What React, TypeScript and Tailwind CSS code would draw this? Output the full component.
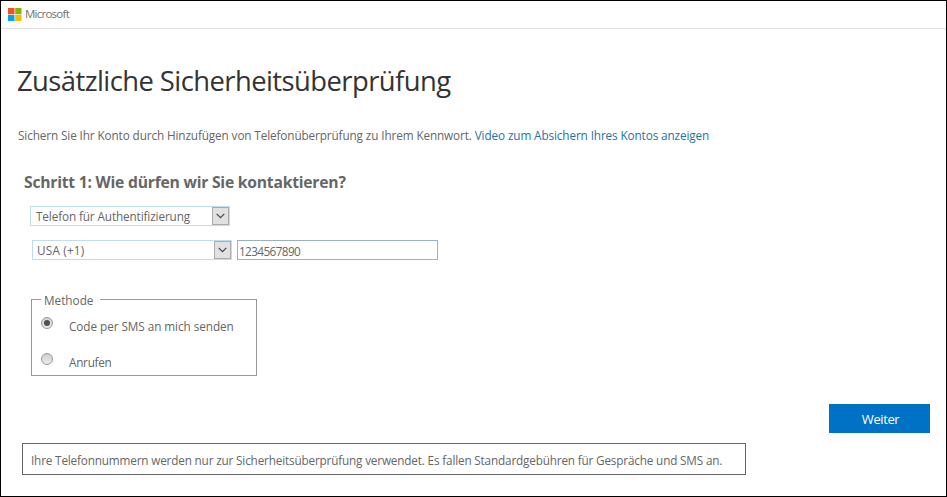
import React from "react";

function Logo() {
  return (
    <svg width="14" height="14" viewBox="0 0 14 14" className="shrink-0" aria-hidden="true">
      <path fill="#f25022" d="M0 0h6.5v6.3H0z" />
      <path fill="#7fba00" d="M7.2 0h6.3v6.3H7.2z" />
      <path fill="#00a4ef" d="M0 7h6.5v6H0z" />
      <path fill="#ffb900" d="M7.2 7h6.3v6H7.2z" />
    </svg>
  );
}

function Dropdown({ label, className, labelClass }: { label: string; className: string; labelClass: string }) {
  return (
    <button type="button" className={`flex h-5 w-[200px] border border-[#c0dcf0] bg-white ${className}`}>
      <span className={`flex-1 text-left leading-[18px] ${labelClass}`}>{label}</span>
      <span className="flex h-[18px] w-[17px] shrink-0 items-center justify-center border border-[#ababab] bg-[#e1e1e1]">
        <svg width="9" height="6" viewBox="0 0 9 6" aria-hidden="true">
          <path d="M0.7 0.8 4.5 4.6 8.3 0.8" fill="none" stroke="#444" strokeWidth="1.2" />
        </svg>
      </span>
    </button>
  );
}

function Radio({ checked }: { checked?: boolean }) {
  return (
    <span className="mt-px flex size-3 shrink-0 items-center justify-center rounded-full border border-[#999] bg-linear-to-b from-[#cfcfcf] to-[#ececec]">
      {checked && <span className="size-1.5 rounded-full bg-[#505050]" />}
    </span>
  );
}

export default function App() {
  return (
    <div className="flex h-[497px] w-[947px] flex-col overflow-hidden border border-black bg-white font-['Open_Sans','Noto_Sans',sans-serif] text-[11.75px] whitespace-nowrap text-[#666]">
      <header className="flex h-7 shrink-0 items-start border-b border-[#ddd] pt-[7px] pl-[7px]">
        <Logo />
        <span className="-mt-0.5 ml-[3px] text-[11.5px] leading-4 font-medium tracking-[-0.75px] text-[#737373]">
          Microsoft
        </span>
      </header>
      <main className="flex flex-col items-start">
        <h1 className="mt-8 ml-4 text-[27.4px] leading-10 tracking-[-0.56px] text-[#333]">
          Zusätzliche Sicherheitsüberprüfung
        </h1>
        <p className="mt-6 ml-[17px] leading-5 tracking-[-0.115px]">
          Sichern Sie Ihr Konto durch Hinzufügen von Telefonüberprüfung zu Ihrem Kennwort.{" "}
          <a className="text-[#2672a8]">Video zum Absichern Ihres Kontos anzeigen</a>
        </p>
        <h2 className="mt-[25px] ml-[23px] text-[15.7px] leading-6 font-bold tracking-[-0.23px]">
          Schritt 1: Wie dürfen wir Sie kontaktieren?
        </h2>
        <Dropdown
          label="Telefon für Authentifizierung"
          className="mt-3 ml-[29px]"
          labelClass="pl-[5px] tracking-[-0.12px]"
        />
        <div className="mt-3.5 ml-[31px] flex gap-[5px]">
          <Dropdown label="USA (+1)" className="" labelClass="pl-1 tracking-[0.2px]" />
          <input
            defaultValue="1234567890"
            className="h-5 w-[201px] border border-[#9ab0c4] bg-white px-px pt-px leading-[17px] tracking-[-0.6px] outline-none"
          />
        </div>
        <section className="mt-[31px] ml-[30px] flex w-[226px] flex-col">
          <div className="flex h-[17px] items-center">
            <span className="h-[9px] w-2.5 self-end border-t border-l border-[#999]" />
            <span className="w-[59px] pl-[3px] leading-4">Methode</span>
            <span className="h-[9px] flex-1 self-end border-t border-r border-[#999]" />
          </div>
          <div className="flex h-[68px] flex-col border-x border-b border-[#999] pl-[9px]">
            <label className="mt-2 flex h-5">
              <Radio checked />
              <span className="ml-4 leading-5 tracking-[-0.06px]">Code per SMS an mich senden</span>
            </label>
            <label className="mt-4 flex h-5">
              <Radio />
              <span className="ml-4 leading-5 tracking-[-0.27px]">Anrufen</span>
            </label>
          </div>
        </section>
        <button
          type="button"
          className="mt-7 mr-4 h-[29px] w-[101px] self-end bg-[#0072c6] pt-0.5 pl-0.5 text-[13px] tracking-[-0.4px] text-white"
        >
          Weiter
        </button>
        <p className="mt-2.5 ml-[21px] h-8 w-[724px] border border-[#666] pl-2 leading-[32px] tracking-[-0.17px]">
          Ihre Telefonnummern werden nur zur Sicherheitsüberprüfung verwendet. Es fallen Standardgebühren für Gespräche und SMS an.
        </p>
      </main>
    </div>
  );
}
